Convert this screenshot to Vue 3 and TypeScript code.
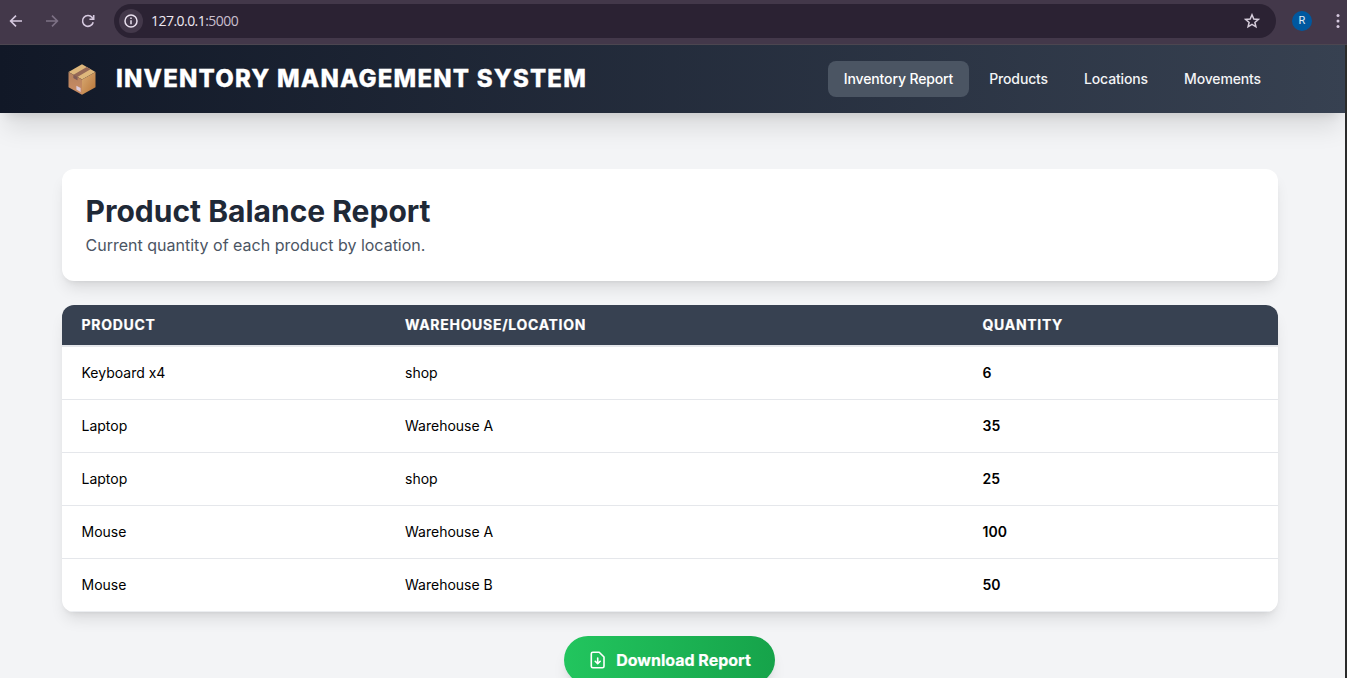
<script setup lang="ts">
interface BalanceRow {
  product: string
  location: string
  quantity: number
}

const links: string[] = ['Inventory Report', 'Products', 'Locations', 'Movements']
const active = 'Inventory Report'

const rows: BalanceRow[] = [
  { product: 'Keyboard x4', location: 'shop', quantity: 6 },
  { product: 'Laptop', location: 'Warehouse A', quantity: 35 },
  { product: 'Laptop', location: 'shop', quantity: 25 },
  { product: 'Mouse', location: 'Warehouse A', quantity: 100 },
  { product: 'Mouse', location: 'Warehouse B', quantity: 50 },
]
</script>

<template>
  <div class="window">
    <div class="browser-bar">
      <svg class="nav-icon" viewBox="0 0 16 16"><path d="M14 8H3M8 2.6 2.6 8 8 13.4" /></svg>
      <svg class="nav-icon dim" viewBox="0 0 16 16"><path d="M2 8h11M8 2.6 13.4 8 8 13.4" /></svg>
      <svg class="nav-icon" viewBox="0 0 16 16"><path d="M13.2 9.2A5.4 5.4 0 1 1 12.2 4.6L13.6 6M13.7 2v4.3H9.4" /></svg>
      <div class="address">
        <span class="info">
          <svg viewBox="0 0 14 14"><circle cx="7" cy="7" r="6" /><path d="M7 6.3v3.9M7 3.6v1.5" /></svg>
        </span>
        <span class="url">127.0.0.1<span class="port">:5000</span></span>
        <svg class="star" viewBox="0 0 16 16"><path d="M8 1.8 9.8 6l4.5.4-3.4 3 1 4.4L8 11.4l-3.9 2.4 1-4.4-3.4-3L6.200 6Z" /></svg>
      </div>
      <span class="avatar">R</span>
      <svg class="dots" viewBox="0 0 4 16"><circle cx="2" cy="2.500" r="1.500" /><circle cx="2" cy="8" r="1.500" /><circle cx="2" cy="13.500" r="1.500" /></svg>
    </div>

    <div class="page">
      <header class="site-header">
        <div class="brand">
          <svg class="box" viewBox="0 0 27 31">
            <defs>
              <linearGradient id="boxLeft" x1="0" y1="0" x2="0" y2="1">
                <stop offset="0" stop-color="#b5825f" />
                <stop offset="1" stop-color="#cb8c62" />
              </linearGradient>
              <linearGradient id="boxRight" x1="0" y1="0" x2="1" y2="1">
                <stop offset="0" stop-color="#d9ab74" />
                <stop offset="1" stop-color="#b87437" />
              </linearGradient>
            </defs>
            <path fill="#deb77c" d="M13.500.3 27 8 13.500 15.400 0 8Z" />
            <path fill="url(#boxLeft)" d="M0 8l13.500 7.400v15.300L0 23.300Z" />
            <path fill="url(#boxRight)" d="M27 8l-13.500 7.400v15.300L27 23.300Z" />
            <path fill="#966957" d="M5 10.700 18.300 3.100 22 5.200 8.900 12.900v3.300L5 14.100Z" />
            <path fill="#805c57" d="M5 10.700l3.900 2.200v3.300L5 14.100Z" />
            <path fill="#dccbdc" d="M7.900 21.800l4.200 2.300v3.800l-4.200-2.300Z" />
          </svg>
          <span class="title">INVENTORY MANAGEMENT SYSTEM</span>
        </div>
        <nav class="links">
          <a v-for="link in links" :key="link" class="link" :class="{ active: link === active }">{{ link }}</a>
        </nav>
      </header>

      <main class="content">
        <section class="intro">
          <h1>Product Balance Report</h1>
          <p>Current quantity of each product by location.</p>
        </section>

        <section class="table">
          <div class="row head">
            <span>PRODUCT</span>
            <span>WAREHOUSE/LOCATION</span>
            <span>QUANTITY</span>
          </div>
          <div v-for="(row, i) in rows" :key="i" class="row">
            <span>{{ row.product }}</span>
            <span>{{ row.location }}</span>
            <span class="qty">{{ row.quantity }}</span>
          </div>
        </section>

        <button class="download" type="button">
          <svg viewBox="0 0 20 20"><path d="M4.800 2.200h6.400L16 7v9.300c0 .9-.6 1.500-1.500 1.500H4.800c-.9 0-1.500-.6-1.500-1.500V3.700c0-.9.6-1.500 1.500-1.500ZM9.700 8v5.800M7.200 11.300l2.500 2.500 2.500-2.500" /></svg>
          <span>Download Report</span>
        </button>
      </main>
    </div>
  </div>
</template>

<style>
html,
body {
  margin: 0;
  overflow: hidden;
}
</style>

<style scoped>
* {
  box-sizing: border-box;
}
.window {
  width: 1347px;
  height: 678px;
  overflow: hidden;
  background: #2b2b2b;
  font-family: Inter, 'Liberation Sans', sans-serif;
}
.browser-bar {
  display: flex;
  align-items: center;
  height: 45px;
  padding: 0 7px 3px 8px;
  background: #43384a;
  border-bottom: 1px solid #4c4650;
}
.nav-icon {
  width: 16px;
  height: 16px;
  margin-right: 20px;
  flex: none;
  fill: none;
  stroke: #d6c9df;
  stroke-width: 1.6;
}
.nav-icon.dim {
  stroke: #7d7185;
}
.nav-icon:nth-child(3) {
  margin-right: 18px;
}
.address {
  display: flex;
  align-items: center;
  width: 1162px;
  height: 34px;
  padding: 0 16px 0 5px;
  border-radius: 17px;
  background: #2b2233;
}
.info {
  display: grid;
  place-items: center;
  width: 24px;
  height: 24px;
  border-radius: 50%;
  background: #43384a;
}
.info svg {
  width: 14px;
  height: 14px;
  fill: none;
  stroke: #e9e0ee;
  stroke-width: 1.5;
}
.url {
  margin-left: 8px;
  color: #eee8f1;
  font: 14px/20px 'Open Sans', sans-serif;
  letter-spacing: -0.54px;
}
.port {
  color: #c9bfce;
}
.star {
  width: 16px;
  height: 16px;
  margin-left: auto;
  fill: none;
  stroke: #d6cddb;
  stroke-width: 1.5;
}
.avatar {
  display: grid;
  place-items: center;
  width: 20px;
  height: 20px;
  margin-left: 16px;
  border-radius: 50%;
  background: #00589f;
  color: #e3edf6;
  font: 11px/20px Roboto, sans-serif;
}
.dots {
  width: 4px;
  height: 16px;
  margin-left: 24px;
  fill: #d6c9df;
  flex: none;
}
.page {
  width: 1345px;
  height: 633px;
  overflow: hidden;
  background: #f3f4f6;
}
.site-header {
  position: relative;
  display: flex;
  align-items: center;
  justify-content: space-between;
  height: 68px;
  padding: 0 68px;
  background: linear-gradient(to right, #111827, #374151);
  box-shadow: 0 20px 25px -5px rgba(0, 0, 0, 0.1), 0 8px 10px -6px rgba(0, 0, 0, 0.1);
}
.brand {
  display: flex;
  align-items: center;
}
.box {
  width: 28px;
  height: 31px;
  margin: 1px 20px 0 0;
}
.title {
  color: #fff;
  font-size: 24px;
  line-height: 32px;
  font-weight: 800;
  letter-spacing: 1.18px;
  white-space: nowrap;
  -webkit-text-stroke: 0.3px #fff;
}
.links {
  display: flex;
  gap: 4px;
}
.link {
  padding: 8px 16px;
  border-radius: 8px;
  color: #f3f4f6;
  font-size: 14px;
  line-height: 20px;
  font-weight: 500;
  letter-spacing: -0.14px;
}
.link.active {
  background: #4b5563;
  color: #fff;
}
.content {
  display: flex;
  flex-direction: column;
  align-items: center;
  gap: 24px;
  width: 1216px;
  margin: 56px 0 0 62px;
}
.intro,
.table {
  width: 100%;
  border-radius: 12px;
  background: #fff;
  box-shadow: 0 10px 15px -3px rgba(0, 0, 0, 0.1), 0 4px 6px -4px rgba(0, 0, 0, 0.1);
}
.intro {
  height: 112px;
  padding: 24px 23.5px;
}
h1 {
  margin: 0;
  color: #1f2937;
  font-size: 30px;
  line-height: 36px;
  font-weight: 700;
}
p {
  margin: 4px 0 0;
  color: #4b5563;
  font-size: 16px;
  line-height: 24px;
}
.table {
  overflow: hidden;
}
.row {
  display: grid;
  grid-template-columns: 323.5px 577.5px 1fr;
  align-items: center;
  height: 53px;
  padding: 0 0 2px 19.5px;
  border-bottom: 1px solid #e5e7eb;
  color: #000;
  font-size: 14px;
}
.row:last-child {
  border-bottom-color: #eceef1;
}
.row.head {
  height: 42px;
  border-bottom-width: 2px;
  background: #374151;
  background-clip: padding-box;
  color: #fff;
  font-weight: 700;
  letter-spacing: 0.7px;
  -webkit-text-stroke: 0.2px #fff;
}
.qty {
  font-weight: 600;
}
.download {
  display: flex;
  align-items: center;
  justify-content: center;
  width: 211px;
  height: 48px;
  margin: 0 0 0 -1px;
  padding: 0;
  gap: 8px;
  border: 0;
  border-radius: 24px;
  background: linear-gradient(to right, #22c55e, #16a34a);
  box-shadow: 0 10px 15px -3px rgba(0, 0, 0, 0.1), 0 4px 6px -4px rgba(0, 0, 0, 0.1);
  color: #fff;
  font: 700 16px/24px Inter, sans-serif;
  -webkit-text-stroke: 0.2px #fff;
}
.download svg {
  width: 20px;
  height: 20px;
  fill: none;
  stroke: #fff;
  stroke-width: 1.6;
  stroke-linecap: round;
  stroke-linejoin: round;
}
</style>
